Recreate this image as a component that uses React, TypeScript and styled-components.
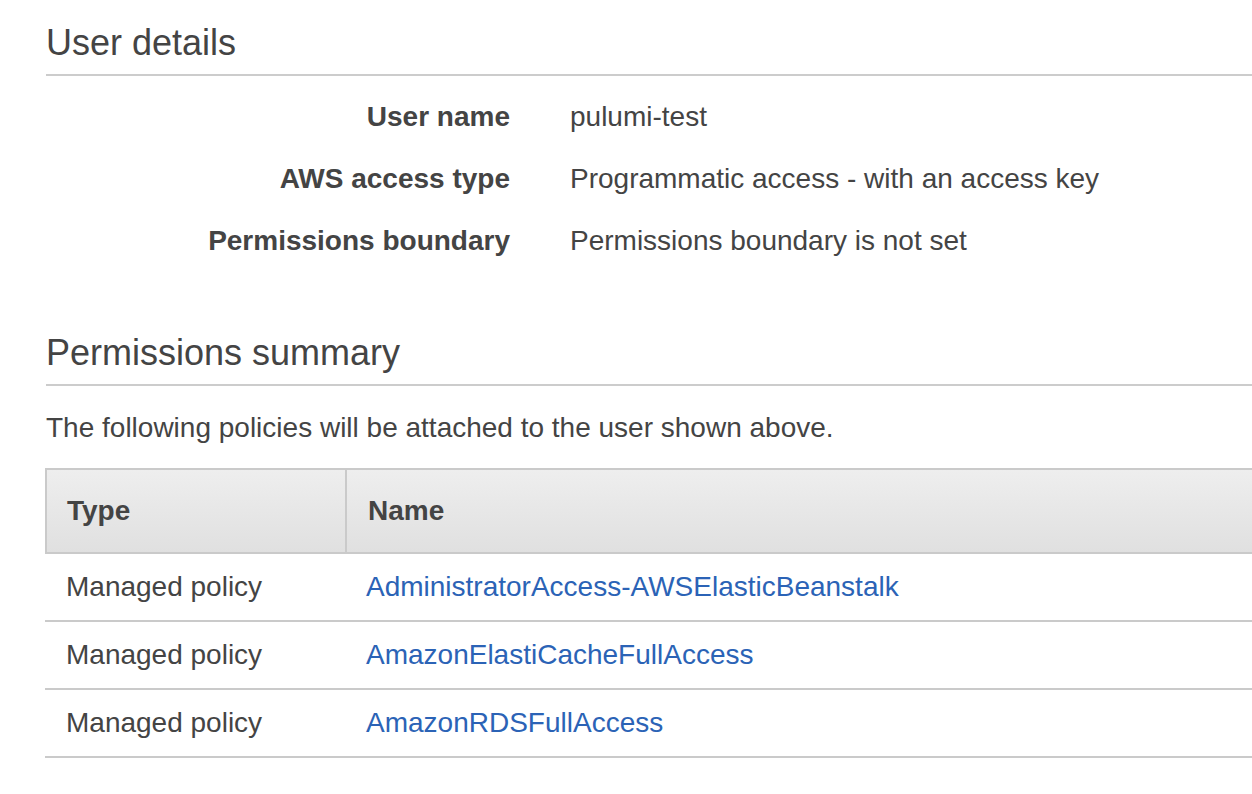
import React from 'react';
import styled, { createGlobalStyle } from 'styled-components';

const GlobalStyle = createGlobalStyle`
  html, body {
    margin: 0;
    padding: 0;
    background: #ffffff;
    overflow: hidden;
  }
  body {
    font-family: 'Liberation Sans', Arial, Helvetica, sans-serif;
    color: #444444;
  }
`;

const Page = styled.div`
  padding: 21px 0 0 46px;
  width: calc(100vw + 40px);
  box-sizing: border-box;
`;

const SectionTitle = styled.h2<{ $top?: number }>`
  margin: ${({ $top }) => $top ?? 0}px 0 0 0;
  padding-bottom: 9px;
  border-bottom: 2px solid #cccccc;
  font-size: 36px;
  line-height: 44px;
  font-weight: normal;
  color: #444444;
`;

const DetailList = styled.dl`
  margin: 10px 0 0 0;
`;

const DetailRow = styled.div`
  display: grid;
  grid-template-columns: 464px 1fr;
  column-gap: 60px;
  align-items: center;
  height: 62px;
`;

const DetailLabel = styled.dt`
  text-align: right;
  font-weight: bold;
  font-size: 28px;
  line-height: 34px;
`;

const DetailValue = styled.dd`
  margin: 0;
  font-size: 28px;
  line-height: 34px;
`;

const Intro = styled.p`
  margin: 25px 0 0 0;
  font-size: 28px;
  line-height: 34px;
`;

const Table = styled.div`
  margin: 23px 0 0 -1px;
`;

const HeadRow = styled.div`
  display: grid;
  grid-template-columns: 300px 1fr;
  height: 86px;
  box-sizing: border-box;
  border: 2px solid #cacaca;
  border-right: none;
  background: linear-gradient(#eeeeee, #e0e0e0);
`;

const HeadCell = styled.div<{ $divider?: boolean }>`
  display: flex;
  align-items: center;
  box-sizing: border-box;
  padding-left: ${({ $divider }) => ($divider ? 20 : 21)}px;
  font-size: 28px;
  font-weight: bold;
  ${({ $divider }) => ($divider ? 'border-right: 2px solid #cacaca;' : '')}
`;

const BodyRow = styled.div`
  display: grid;
  grid-template-columns: 300px 1fr;
  height: 68px;
  box-sizing: border-box;
  border-bottom: 2px solid #cacaca;
`;

const BodyCell = styled.div`
  display: flex;
  align-items: center;
  padding-left: 21px;
  font-size: 28px;
`;

const PolicyLink = styled.a`
  color: #2b63b6;
  text-decoration: none;
  cursor: pointer;
`;

const details = [
  ['User name', 'pulumi-test'],
  ['AWS access type', 'Programmatic access - with an access key'],
  ['Permissions boundary', 'Permissions boundary is not set'],
];

const policies = [
  'AdministratorAccess-AWSElasticBeanstalk',
  'AmazonElastiCacheFullAccess',
  'AmazonRDSFullAccess',
];

export default function App() {
  return (
    <>
      <GlobalStyle />
      <Page>
        <SectionTitle>User details</SectionTitle>
        <DetailList>
          {details.map(([label, value]) => (
            <DetailRow key={label}>
              <DetailLabel>{label}</DetailLabel>
              <DetailValue>{value}</DetailValue>
            </DetailRow>
          ))}
        </DetailList>

        <SectionTitle $top={59}>Permissions summary</SectionTitle>
        <Intro>The following policies will be attached to the user shown above.</Intro>

        <Table>
          <HeadRow>
            <HeadCell $divider>Type</HeadCell>
            <HeadCell>Name</HeadCell>
          </HeadRow>
          {policies.map((name) => (
            <BodyRow key={name}>
              <BodyCell>Managed policy</BodyCell>
              <BodyCell>
                <PolicyLink>{name}</PolicyLink>
              </BodyCell>
            </BodyRow>
          ))}
        </Table>
      </Page>
    </>
  );
}
